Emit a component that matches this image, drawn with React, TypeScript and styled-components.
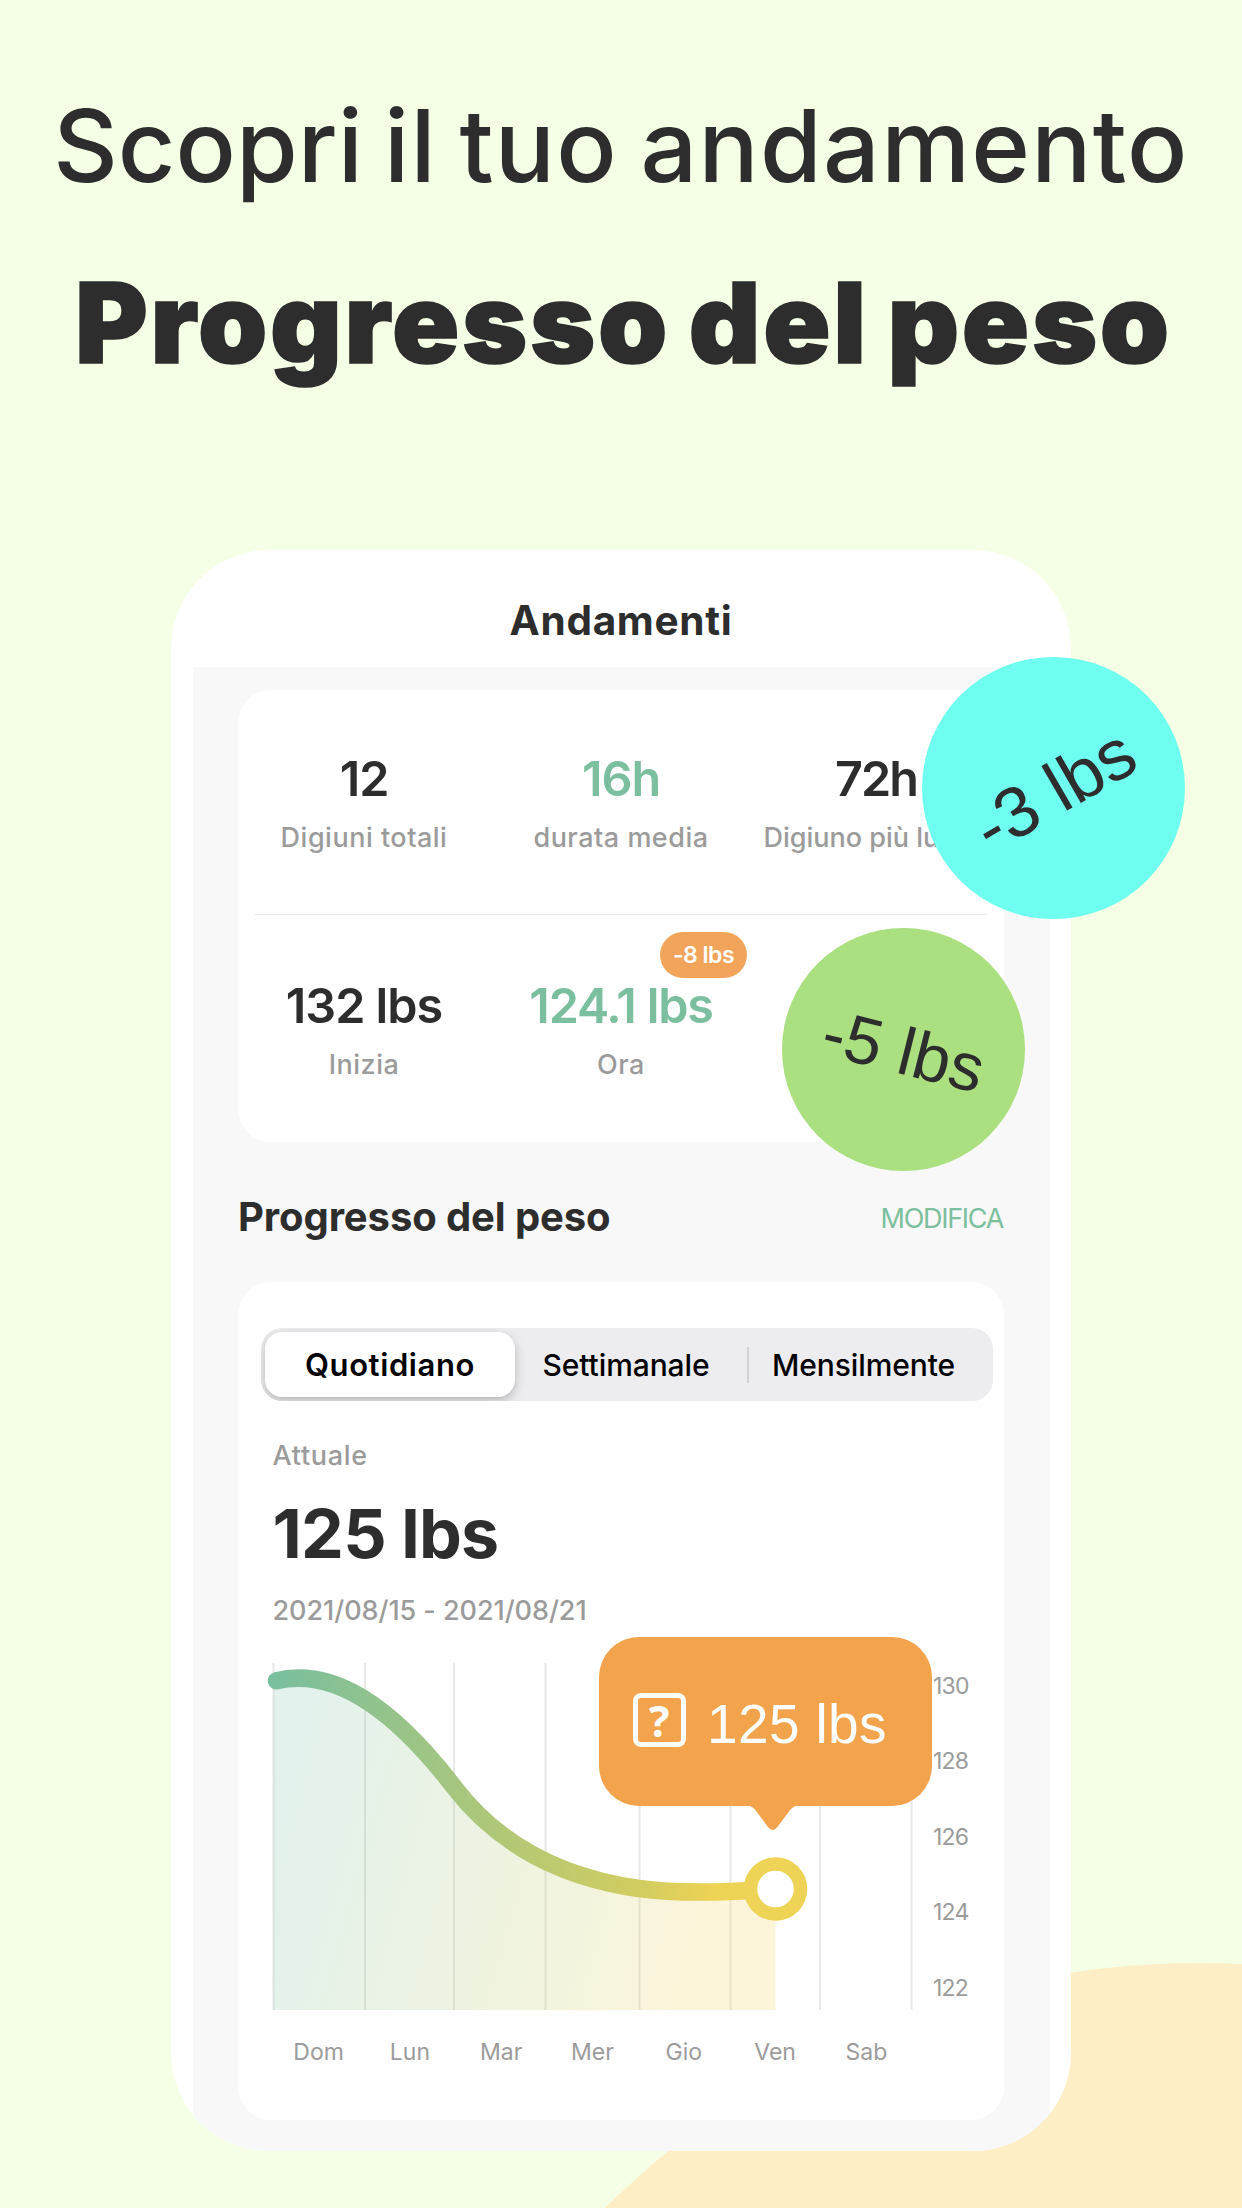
import React from 'react';
import styled, { createGlobalStyle } from 'styled-components';

const ink = '#2d2d2d';
const green = '#7bbf9e';
const grey = '#9b9b9b';
const orange = '#f2a34c';

const GlobalStyle = createGlobalStyle`
  * { box-sizing: border-box; margin: 0; }
  body { margin: 0; background: #f4ffe5; }
`;

const Page = styled.main`
  position: relative;
  width: 1242px;
  height: 2208px;
  overflow: hidden;
  background: #f4ffe5;
  color: ${ink};
  font-family: Inter, 'Liberation Sans', sans-serif;
  font-kerning: normal;
`;

const Blob = styled.div`
  position: absolute;
  left: 358px;
  top: 1963px;
  width: 1680px;
  height: 1680px;
  border-radius: 50%;
  background: #fdeec5;
`;

const Hero = styled.header`
  display: flex;
  flex-direction: column;
  align-items: center;
  gap: 57px;
  height: 550px;
  padding-top: 85.5px;
  white-space: nowrap;
`;

const Lead = styled.p`
  font-size: 100px;
  font-weight: 500;
  line-height: 120px;
  word-spacing: -5.5px;
`;

const Loose = styled.span`
  letter-spacing: 1.3px;
`;

const Title = styled.h1`
  padding-left: 5px;
  font-size: 111px;
  font-weight: 900;
  line-height: 120px;
  letter-spacing: 2.7px;
  word-spacing: -6px;
  -webkit-text-stroke: 1.6px ${ink};
`;

const Phone = styled.section`
  position: relative;
  display: flex;
  flex-direction: column;
  width: 900px;
  height: 1601px;
  margin: 0 auto;
  overflow: hidden;
  border-radius: 98px;
  background: #fff;
`;

const PhoneHeader = styled.div`
  display: flex;
  align-items: center;
  justify-content: center;
  height: 117px;
  padding-top: 24px;
  font-size: 40.5px;
  font-weight: 700;
  letter-spacing: 0.7px;
`;

const Body = styled.div`
  flex: 1;
  margin: 0 21px 0 21.5px;
  padding: 23px 46px 0 45.5px;
  background: #f8f8f8;
`;

const Card = styled.div<{ $height: number; $top?: number }>`
  height: ${(p) => p.$height}px;
  padding-top: ${(p) => p.$top ?? 0}px;
  border-radius: 33px;
  background: #fff;
`;

const StatRow = styled.div<{ $height: number; $top: number }>`
  display: grid;
  grid-template-columns: 256px 258px 1fr;
  height: ${(p) => p.$height}px;
  padding-top: ${(p) => p.$top}px;
`;

const Divider = styled.hr`
  height: 1.5px;
  margin: 0 17px;
  border: 0;
  background: #e9e9e9;
`;

const Stat = styled.div`
  position: relative;
  display: flex;
  flex-direction: column;
  align-items: center;
  gap: 13px;
  padding-right: 4px;
  white-space: nowrap;
`;

const Value = styled.div<{ $accent?: boolean; $spacing?: number }>`
  font-size: 48.5px;
  font-weight: 600;
  line-height: 56px;
  letter-spacing: ${(p) => p.$spacing ?? -1}px;
  color: ${(p) => (p.$accent ? green : ink)};
`;

const Label = styled.div<{ $spacing?: number }>`
  font-size: 27px;
  font-weight: 500;
  line-height: 36px;
  letter-spacing: ${(p) => p.$spacing ?? 0.5}px;
  color: ${grey};
`;

const Delta = styled.span`
  position: absolute;
  top: -45.5px;
  right: 5px;
  display: flex;
  align-items: center;
  justify-content: center;
  width: 87px;
  height: 46px;
  border-radius: 23px;
  background: #f2a55a;
  color: #fff;
  font-size: 23px;
  font-weight: 600;
  letter-spacing: -0.5px;
`;

const SectionHeader = styled.div`
  display: flex;
  align-items: center;
  justify-content: space-between;
  height: 140px;
  padding-top: 9px;
`;

const SectionTitle = styled.h2`
  font-size: 40px;
  font-weight: 700;
  letter-spacing: -0.1px;
`;

const Edit = styled.a`
  margin-right: 1px;
  padding-top: 3px;
  font-size: 27px;
  font-weight: 400;
  letter-spacing: -1.3px;
  color: ${green};
`;

const Tabs = styled.div`
  display: flex;
  align-items: center;
  width: 732px;
  height: 73px;
  margin-left: 23px;
  padding-left: 4px;
  overflow: hidden;
  border-radius: 21px;
  background: #ededef;
  color: #000;
  font-size: 30px;
`;

const Tab = styled.div<{ $active?: boolean; $width: number }>`
  display: flex;
  align-items: center;
  justify-content: center;
  width: ${(p) => p.$width}px;
  height: 65px;
  letter-spacing: -0.1px;
  font-weight: ${(p) => (p.$active ? 600 : 500)};
  ${(p) =>
    p.$active &&
    `
    margin-right: -9.5px;
    border-radius: 17px;
    background: #fff;
    font-size: 31px;
    letter-spacing: 0.6px;
    box-shadow: 0 4px 11px rgba(0, 0, 0, 0.22), 0 1px 2px rgba(0, 0, 0, 0.05);
  `}
`;

const TabRule = styled.span`
  width: 2px;
  height: 36px;
  background: #d2d2d6;
`;

const Summary = styled.div`
  padding: 37px 0 34px 34.5px;
`;

const Current = styled.div`
  margin: 19px 0 20px;
  font-size: 68px;
  font-weight: 700;
  line-height: 80px;
  letter-spacing: -0.75px;
`;

const Chart = styled.div`
  position: relative;
  display: flex;
  height: 347px;

  svg {
    display: block;
    overflow: visible;
  }
`;

const Scale = styled.div`
  display: flex;
  flex-direction: column;
  justify-content: space-between;
  height: 332px;
  margin-top: 7.5px;
  font-size: 23px;
  line-height: 30px;
  letter-spacing: -0.8px;
  color: ${grey};
`;

const Days = styled.div`
  display: grid;
  grid-template-columns: repeat(7, 1fr);
  width: 639px;
  margin: 26.5px 0 0 35px;
  font-size: 23px;
  line-height: 30px;
  text-align: center;
  color: ${grey};
`;

const Tooltip = styled.div`
  position: absolute;
  left: 361px;
  top: -26px;
  display: flex;
  align-items: center;
  gap: 21px;
  width: 333px;
  height: 169px;
  padding-left: 33.5px;
  border-radius: 40px;
  background: ${orange};
  color: #fff;
  font-family: 'Liberation Sans', Arial, sans-serif;
`;

const Glyph = styled.span`
  display: flex;
  align-items: center;
  justify-content: center;
  width: 53.5px;
  height: 54px;
  margin-bottom: 3px;
  border: 5px solid #fff;
  border-radius: 8px;
  font-family: 'Open Sans', sans-serif;
  font-size: 43px;
  font-weight: 700;
  line-height: 1;
`;

const TooltipText = styled.span`
  padding-top: 4.5px;
  font-size: 55px;
  letter-spacing: 0.36px;
  white-space: nowrap;
`;

const Tail = styled.svg`
  position: absolute;
  left: 151px;
  top: 168.5px;
`;

const Bubble = styled.div<{ $x: number; $y: number; $size: number; $color: string }>`
  position: absolute;
  left: ${(p) => p.$x}px;
  top: ${(p) => p.$y}px;
  display: flex;
  align-items: center;
  justify-content: center;
  width: ${(p) => p.$size}px;
  height: ${(p) => p.$size}px;
  border-radius: 50%;
  background: ${(p) => p.$color};
`;

const BubbleText = styled.span<{ $angle: number; $size: number; $drop: number }>`
  font-family: 'Liberation Sans', Arial, sans-serif;
  font-size: ${(p) => p.$size}px;
  white-space: nowrap;
  transform: rotate(${(p) => p.$angle}deg) translateY(${(p) => p.$drop}px);
`;

const gridLines = [35.5, 127, 216, 307.5, 401.5, 492.5, 582, 673.5];
const curve =
  'M38.5 17.7 C92 5 150 38 216 124 C248 166 304 212 401 225.5 C440 231 490 229.5 537.5 226';
const scale = [130, 128, 126, 124, 122];
const days = ['Dom', 'Lun', 'Mar', 'Mer', 'Gio', 'Ven', 'Sab'];

function WeightPlot() {
  return (
    <svg width="695" height="347" viewBox="0 0 695 347">
      <defs>
        <linearGradient id="line" gradientUnits="userSpaceOnUse" x1="38" y1="0" x2="500" y2="60">
          <stop offset="0" stopColor="#7abf9e" />
          <stop offset="0.85" stopColor="#d3cd5f" />
          <stop offset="1" stopColor="#efd355" />
        </linearGradient>
        <linearGradient id="area" gradientUnits="userSpaceOnUse" x1="60" y1="80" x2="500" y2="200">
          <stop offset="0" stopColor="#7abfa6" stopOpacity="0.21" />
          <stop offset="0.5" stopColor="#aec870" stopOpacity="0.21" />
          <stop offset="1" stopColor="#f5d254" stopOpacity="0.22" />
        </linearGradient>
      </defs>
      {gridLines.map((x) => (
        <line key={x} x1={x} x2={x} y1="0" y2="347" stroke="#e8e8e8" strokeWidth="2" />
      ))}
      <path d={`${curve} V347 H35.5 V17.7 Z`} fill="url(#area)" />
      <path d={curve} fill="none" stroke="url(#line)" strokeWidth="17.5" strokeLinecap="round" />
      <circle cx="537.5" cy="226" r="25" fill="#fff" stroke="#efd356" strokeWidth="13.5" />
    </svg>
  );
}

export default function App() {
  return (
    <Page>
      <GlobalStyle />
      <Blob />
      <Hero>
        <Lead>
          Scopri <Loose>il tuo andamento</Loose>
        </Lead>
        <Title>Progresso del peso</Title>
      </Hero>
      <Phone>
        <PhoneHeader>Andamenti</PhoneHeader>
        <Body>
          <Card $height={452}>
            <StatRow $height={223.5} $top={61}>
              <Stat>
                <Value>12</Value>
                <Label>Digiuni totali</Label>
              </Stat>
              <Stat>
                <Value $accent>16h</Value>
                <Label>durata media</Label>
              </Stat>
              <Stat>
                <Value $spacing={-2}>72h</Value>
                <Label $spacing={0}>Digiuno più lungo</Label>
              </Stat>
            </StatRow>
            <Divider />
            <StatRow $height={227} $top={62.5}>
              <Stat>
                <Value>132 lbs</Value>
                <Label>Inizia</Label>
              </Stat>
              <Stat>
                <Value $accent $spacing={-1.2}>124.1 lbs</Value>
                <Label>Ora</Label>
                <Delta>-8 lbs</Delta>
              </Stat>
            </StatRow>
          </Card>
          <SectionHeader>
            <SectionTitle>Progresso del peso</SectionTitle>
            <Edit>MODIFICA</Edit>
          </SectionHeader>
          <Card $height={838} $top={46}>
            <Tabs>
              <Tab $active $width={250}>Quotidiano</Tab>
              <Tab $width={241}>Settimanale</Tab>
              <TabRule />
              <Tab $width={230}>Mensilmente</Tab>
            </Tabs>
            <Summary>
              <Label $spacing={0.7}>Attuale</Label>
              <Current>125 lbs</Current>
              <Label $spacing={-0.05}>2021/08/15 - 2021/08/21</Label>
            </Summary>
            <Chart>
              <WeightPlot />
              <Scale>
                {scale.map((v) => (
                  <span key={v}>{v}</span>
                ))}
              </Scale>
              <Tooltip>
                <Glyph>?</Glyph>
                <TooltipText>125 lbs</TooltipText>
                <Tail width="46" height="25" viewBox="0 0 46 25">
                  <path
                    d="M0 0 Q3 1 5 3.5 L18 21 Q22.7 27 27.4 21 L40.5 3.5 Q42.5 1 45.5 0Z"
                    fill={orange}
                  />
                </Tail>
              </Tooltip>
            </Chart>
            <Days>
              {days.map((d) => (
                <span key={d}>{d}</span>
              ))}
            </Days>
          </Card>
        </Body>
      </Phone>
      <Bubble $x={922} $y={656.5} $size={262.5} $color="#6ffff0">
        <BubbleText $angle={-30} $size={71} $drop={2.7}>-3 lbs</BubbleText>
      </Bubble>
      <Bubble $x={782} $y={928} $size={243} $color="#abe080">
        <BubbleText $angle={14} $size={67} $drop={1}>-5 lbs</BubbleText>
      </Bubble>
    </Page>
  );
}
